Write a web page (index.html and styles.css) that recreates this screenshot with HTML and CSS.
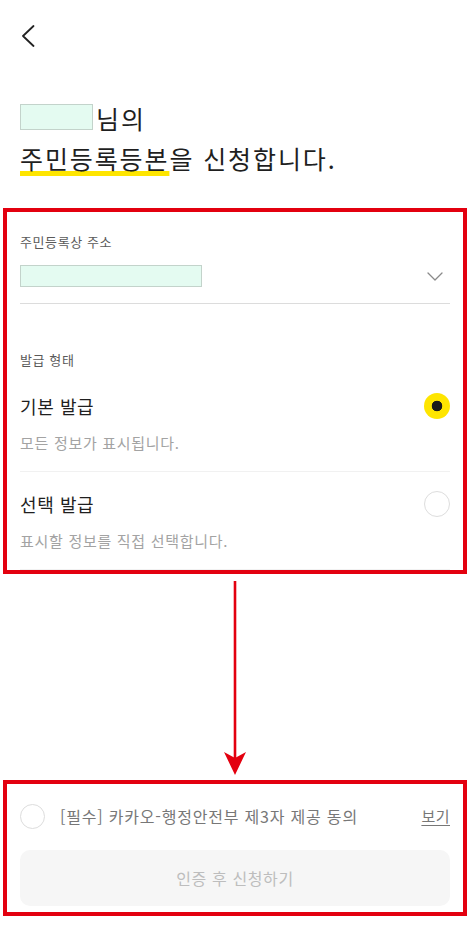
FILE: index.html
```html
<!DOCTYPE html>
<html lang="ko">
<head>
<meta charset="utf-8">
<title>주민등록등본 신청</title>
<link rel="stylesheet" href="styles.css">
</head>
<body>
<div class="screen">
  <header class="topbar">
    <svg class="back" width="14" height="22" viewBox="0 0 14 22" aria-label="뒤로">
      <path d="M12.5 1 L2 11 L12.5 21" fill="none" stroke="#222" stroke-width="1.8" stroke-linecap="round" stroke-linejoin="round"/>
    </svg>
  </header>

  <h1 class="title">
    <span class="title-line"><span class="mask mask-name"></span>님의</span>
    <span class="title-line"><span class="mark">주민등록등본</span>을 신청합니다.</span>
  </h1>

  <section class="hl hl-form">
    <div class="label">주민등록상 주소</div>
    <div class="select">
      <span class="mask mask-addr"></span>
      <svg class="chev" width="16" height="9" viewBox="0 0 16 9">
        <path d="M1 1 L8 8 L15 1" fill="none" stroke="#8a8a8a" stroke-width="1.3" stroke-linecap="round" stroke-linejoin="round"/>
      </svg>
    </div>

    <div class="label label-type">발급 형태</div>
    <div class="options">
      <div class="option">
        <div class="option-head">
          <span class="option-title">기본 발급</span>
          <span class="radio radio-on"></span>
        </div>
        <div class="option-desc">모든 정보가 표시됩니다.</div>
      </div>
      <div class="option">
        <div class="option-head">
          <span class="option-title">선택 발급</span>
          <span class="radio"></span>
        </div>
        <div class="option-desc">표시할 정보를 직접 선택합니다.</div>
      </div>
    </div>
  </section>

  <div class="arrow-gap">
    <svg class="arrow" width="24" height="194" viewBox="0 0 24 194">
      <line x1="12" y1="0" x2="12" y2="178" stroke="#e3000f" stroke-width="2.6"/>
      <polygon points="1,171 12,177 23,171 12,194" fill="#e3000f"/>
    </svg>
  </div>

  <section class="hl hl-foot">
    <div class="agree">
      <span class="check"></span>
      <span class="agree-text">[필수] 카카오-행정안전부 제3자 제공 동의</span>
      <a class="agree-link" href="#">보기</a>
    </div>
    <button class="submit" type="button" disabled>인증 후 신청하기</button>
  </section>
</div>
</body>
</html>
```

FILE: styles.css
```css
* { box-sizing: border-box; }

html, body {
  margin: 0;
  padding: 0;
  background: #ffffff;
}

body {
  font-family: "Noto Sans CJK KR", "Noto Sans", sans-serif;
  color: #222222;
}

.screen {
  width: 470px;
  height: 946px;
  padding: 0 20px;
  overflow: hidden;
}

.topbar {
  height: 47px;
  padding-top: 25px;
}

.back {
  display: block;
  margin-left: 1px;
}

.title {
  margin: 51px 0 30px;
  font-size: 25px;
  font-weight: 400;
  letter-spacing: 1.9px;
  color: #1f1f1f;
}

.title-line {
  display: flex;
  align-items: center;
  height: 40px;
  line-height: 40px;
}

.mask {
  display: inline-block;
  background: #e4fbf1;
  border: 1px solid #c3d3cb;
}

.mask-name {
  width: 73px;
  height: 26px;
  margin-right: 3px;
  margin-top: -2px;
}

.mask-addr {
  width: 182px;
  height: 22px;
}

.mark {
  text-decoration: underline;
  text-decoration-color: #fee500;
  text-decoration-thickness: 5px;
  text-underline-offset: 2px;
  text-decoration-skip-ink: none;
}

.hl {
  margin: 0 -17px;
  padding: 0 13px;
  border: 4px solid #e3000f;
}

.hl-form {
  padding-top: 21px;
}

.label {
  font-size: 13px;
  line-height: 18px;
  color: #5a5a5a;
  letter-spacing: 0.6px;
}

.select {
  display: flex;
  align-items: center;
  justify-content: space-between;
  margin-top: 14px;
  padding: 0 7px 16px 0;
  border-bottom: 1px solid #dcdcdc;
}

.chev {
  display: block;
}

.label-type {
  margin-top: 47px;
}

.options {
  margin-top: 5px;
}

.option {
  padding: 19px 0 17px;
  border-bottom: 1px solid #f1f1f1;
}

.option-head {
  display: flex;
  align-items: center;
  justify-content: space-between;
  height: 26px;
}

.option-title {
  font-size: 18px;
  line-height: 26px;
  color: #1f1f1f;
  letter-spacing: 0.6px;
}

.option-desc {
  margin-top: 13px;
  font-size: 15px;
  line-height: 22px;
  color: #a3a3a3;
  letter-spacing: 0.7px;
}

.radio {
  display: block;
  width: 26px;
  height: 26px;
  border-radius: 50%;
  border: 1.5px solid #dddddd;
  background: #ffffff;
}

.radio-on {
  border: none;
  background: radial-gradient(circle, #191919 0 5px, #fee500 5.6px);
}

.arrow-gap {
  height: 206px;
  padding-top: 7px;
}

.arrow {
  display: block;
  margin: 0 auto;
}

.hl-foot {
  padding-top: 19px;
  padding-bottom: 6px;
}

.agree {
  display: flex;
  align-items: center;
  height: 26px;
}

.check {
  flex: none;
  width: 25px;
  height: 25px;
  border-radius: 50%;
  border: 1.5px solid #dddddd;
}

.agree-text {
  flex: 1;
  margin-left: 15px;
  font-size: 16px;
  line-height: 24px;
  color: #777777;
  letter-spacing: 0.8px;
}

.agree-link {
  font-size: 15px;
  line-height: 24px;
  color: #777777;
  letter-spacing: 0.5px;
  text-decoration: underline;
  text-underline-offset: 3px;
}

.submit {
  display: block;
  width: 100%;
  height: 56px;
  margin-top: 21px;
  border: none;
  border-radius: 10px;
  background: #f6f6f6;
  font-family: "Noto Sans CJK KR", "Noto Sans", sans-serif;
  font-size: 16px;
  color: #bdbdbd;
  letter-spacing: 0.6px;
}
```
